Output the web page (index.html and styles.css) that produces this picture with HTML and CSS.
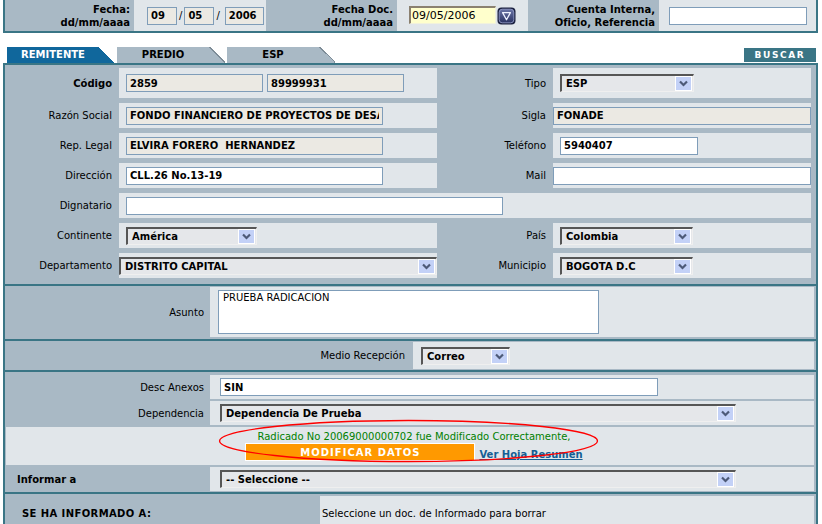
FILE: index.html
```html
<!DOCTYPE html>
<html lang="es">
<head>
<meta charset="utf-8">
<title>Radicación</title>
<link rel="stylesheet" href="styles.css">
</head>
<body>
<div class="page">
  <div class="header">
    <div class="hlabel"><span>Fecha:</span><span>dd/mm/aaaa</span></div>
    <div class="hval dates">
      <input class="inp ro d2" value="09"><span class="sl">/</span>
      <input class="inp ro d2" value="05"><span class="sl">/</span>
      <input class="inp ro d4" value="2006">
    </div>
    <div class="hlabel"><span>Fecha Doc.</span><span>dd/mm/aaaa</span></div>
    <div class="hval center">
      <input class="docdate" value="09/05/2006">
      <button class="cal" type="button" aria-label="calendario">
        <svg width="19" height="18" viewBox="0 0 19 18">
          <defs><linearGradient id="cg" x1="0" y1="0" x2="0" y2="1"><stop offset="0" stop-color="#6a74a6"/><stop offset="1" stop-color="#2a3262"/></linearGradient></defs>
          <rect x="0.5" y="0.5" width="18" height="17" rx="4" fill="#1c2140"/>
          <rect x="2.2" y="2.2" width="14.6" height="13.6" rx="3" fill="url(#cg)" stroke="#9aa3cf" stroke-width="0.8"/>
          <path d="M5.6 5.6 L13.4 5.6 L9.5 12.8 Z" fill="none" stroke="#eef1ff" stroke-width="1.3" stroke-linejoin="round"/>
        </svg>
      </button>
    </div>
    <div class="hlabel"><span>Cuenta Interna,</span><span>Oficio, Referencia</span></div>
    <div class="hval center"><input class="inp cuenta" value=""></div>
  </div>

  <div class="tabbar">
    <div class="tabs">
      <div class="tab active"><span class="tab-body">REMITENTE</span><span class="tab-slant"></span></div>
      <div class="tab"><span class="tab-body">PREDIO</span><span class="tab-slant"></span></div>
      <div class="tab"><span class="tab-body">ESP</span><span class="tab-slant"></span></div>
    </div>
    <button class="buscar" type="button">BUSCAR</button>
  </div>

  <div class="main">
    <div class="sec s1">
      <div class="lbl b">Código</div>
      <div class="val"><input class="inp ro w137" value="2859"><input class="inp ro w137 ml4" value="89999931"></div>
      <div class="lbl">Tipo</div>
      <div class="val"><div class="sel w134"><span>ESP</span><i class="arr"><svg width="15" height="13" viewBox="0 0 15 13"><path d="M4 4.5 L7.5 8 L11 4.5" fill="none" stroke="#4d5a78" stroke-width="2.2"/></svg></i></div></div>

      <div class="lbl">Razón Social</div>
      <div class="val"><input class="inp ro w257" value="FONDO FINANCIERO DE PROYECTOS DE DESARROLLO"></div>
      <div class="lbl">Sigla</div>
      <div class="val flush"><input class="inp ro full" value="FONADE"></div>

      <div class="lbl">Rep. Legal</div>
      <div class="val"><input class="inp ro w257" value="ELVIRA FORERO  HERNANDEZ"></div>
      <div class="lbl">Teléfono</div>
      <div class="val"><input class="inp w138" value="5940407"></div>

      <div class="lbl">Dirección</div>
      <div class="val"><input class="inp w257" value="CLL.26 No.13-19"></div>
      <div class="lbl">Mail</div>
      <div class="val flush"><input class="inp full" value=""></div>

      <div class="lbl">Dignatario</div>
      <div class="val span3"><input class="inp w377" value=""></div>

      <div class="lbl">Continente</div>
      <div class="val"><div class="sel w131"><span>América</span><i class="arr"><svg width="15" height="13" viewBox="0 0 15 13"><path d="M4 4.5 L7.5 8 L11 4.5" fill="none" stroke="#4d5a78" stroke-width="2.2"/></svg></i></div></div>
      <div class="lbl">País</div>
      <div class="val"><div class="sel w133"><span>Colombia</span><i class="arr"><svg width="15" height="13" viewBox="0 0 15 13"><path d="M4 4.5 L7.5 8 L11 4.5" fill="none" stroke="#4d5a78" stroke-width="2.2"/></svg></i></div></div>

      <div class="lbl">Departamento</div>
      <div class="val flush"><div class="sel full"><span>DISTRITO CAPITAL</span><i class="arr"><svg width="15" height="13" viewBox="0 0 15 13"><path d="M4 4.5 L7.5 8 L11 4.5" fill="none" stroke="#4d5a78" stroke-width="2.2"/></svg></i></div></div>
      <div class="lbl">Municipio</div>
      <div class="val"><div class="sel w133"><span>BOGOTA D.C</span><i class="arr"><svg width="15" height="13" viewBox="0 0 15 13"><path d="M4 4.5 L7.5 8 L11 4.5" fill="none" stroke="#4d5a78" stroke-width="2.2"/></svg></i></div></div>
    </div>

    <div class="sec s2">
      <div class="lbl lbl-low">Asunto</div>
      <div class="val pad8"><textarea class="txt">PRUEBA RADICACION</textarea></div>
    </div>

    <div class="sec s3">
      <div class="lbl lbl-medio">Medio Recepción</div>
      <div class="val pad8"><div class="sel w89"><span>Correo</span><i class="arr"><svg width="15" height="13" viewBox="0 0 15 13"><path d="M4 4.5 L7.5 8 L11 4.5" fill="none" stroke="#4d5a78" stroke-width="2.2"/></svg></i></div></div>
    </div>

    <div class="sec s4">
      <div class="lbl lbl-low">Desc Anexos</div>
      <div class="val pad10"><input class="inp w438" value="SIN"></div>

      <div class="lbl lbl-low">Dependencia</div>
      <div class="val pad10"><div class="sel w516"><span>Dependencia De Prueba</span><i class="arr"><svg width="15" height="13" viewBox="0 0 15 13"><path d="M4 4.5 L7.5 8 L11 4.5" fill="none" stroke="#4d5a78" stroke-width="2.2"/></svg></i></div></div>

      <div class="msg">
        <div class="ok">Radicado No 20069000000702 fue Modificado Correctamente,</div>
        <div class="actions">
          <button class="modificar" type="button">MODIFICAR DATOS</button>
          <a class="hoja" href="#">Ver Hoja Resumen</a>
        </div>
      </div>

      <div class="lbl lbl-left b">Informar a</div>
      <div class="val pad10"><div class="sel w516"><span>-- Seleccione --</span><i class="arr"><svg width="15" height="13" viewBox="0 0 15 13"><path d="M4 4.5 L7.5 8 L11 4.5" fill="none" stroke="#4d5a78" stroke-width="2.2"/></svg></i></div></div>

      <svg class="mark" width="381" height="44" viewBox="0 0 381 44">
        <ellipse cx="190.5" cy="22" rx="189" ry="20.5" fill="none" stroke="#ff0000" stroke-width="1.3"/>
      </svg>
    </div>

    <div class="sec s5">
      <div class="lbl lbl-info">SE HA INFORMADO A:</div>
      <div class="val info">Seleccione un doc. de Informado para borrar</div>
    </div>
  </div>
</div>
</body>
</html>
```

FILE: styles.css
```css
* { box-sizing: border-box; }

body {
  margin: 0;
  background: #ffffff;
  font-family: "DejaVu Sans", Verdana, sans-serif;
  font-size: 10px;
  color: #000;
}

.page { width: 822px; }

/* ---------- header ---------- */
.header {
  margin-left: 3px;
  width: 815px;
  height: 33px;
  border: 2px solid #3a7585;
  border-top: 0;
  display: grid;
  grid-template-columns: 129px 132px 131px 131px 131px 157px;
}

.hlabel {
  background: #a9b9c5;
  font-weight: bold;
  line-height: 13px;
  padding-right: 4px;
  display: flex;
  flex-direction: column;
  justify-content: center;
  align-items: flex-end;
  text-align: right;
}

.hval {
  background: #e1e6ea;
  display: flex;
  align-items: center;
}
.hval.dates { padding-left: 13px; gap: 2px; }
.hval.center { justify-content: center; gap: 1px; }
.sl { font-size: 10px; color: #000; }

.inp {
  height: 18px;
  border: 1px solid #7f9db9;
  background: #ffffff;
  font: bold 10px "DejaVu Sans", Verdana, sans-serif;
  color: #000;
  padding: 0 3px;
  outline: none;
  margin: 0;
}
.ro { background: #ebe9e3; }
.d2 { width: 30px; }
.d4 { width: 39px; margin-left: 3px; }
.cuenta { width: 138px; }

.docdate {
  width: 87px;
  height: 18px;
  background: #ffffcc;
  border: 1px solid #f2f2dc;
  border-top: 2px solid #8a8070;
  border-left: 2px solid #8a8070;
  font: 11px "DejaVu Sans", Verdana, sans-serif;
  padding: 0 1px;
  outline: none;
  margin: 0 0 1px 0;
}
.cal {
  width: 19px;
  height: 18px;
  padding: 0;
  border: 0;
  background: none;
  display: flex;
}

/* ---------- tabs ---------- */
.tabbar {
  height: 30px;
  display: flex;
  justify-content: space-between;
  align-items: flex-end;
  padding: 0 6px 0 7px;
}
.tabs { display: flex; gap: 2px; }
.tab { display: flex; height: 16px; }
.tab-body {
  width: 92px;
  background: #a9b9c5;
  font-weight: bold;
  text-align: center;
  line-height: 16px;
  color: #000;
}
.tab-slant {
  width: 16px;
  background: linear-gradient(to top right, #a9b9c5 50%, #7d8c97 50%, #7d8c97 56%, transparent 56%);
}
.tab.active .tab-body { background: #10679c; color: #ffffff; }
.tab.active .tab-slant {
  background: linear-gradient(to top right, #10679c 50%, transparent 50%);
}

.buscar {
  width: 72px;
  height: 14px;
  margin-bottom: 1px;
  padding: 0;
  border: 0;
  background: #3a7585;
  color: #ffffff;
  font: bold 9px "DejaVu Sans", Verdana, sans-serif;
  letter-spacing: 1.6px;
  line-height: 14px;
  text-align: center;
}

/* ---------- main form ---------- */
.main {
  margin-left: 3px;
  width: 815px;
  border: 2px solid #3a7585;
  border-bottom: 0;
  background: #a9b9c5;
}

.sec { display: grid; column-gap: 1px; }
.sec + .sec { border-top: 2px solid #3a7585; }

.lbl {
  display: flex;
  align-items: center;
  justify-content: flex-end;
  padding-right: 6px;
  white-space: nowrap;
}
.b { font-weight: bold; }

.val {
  background: #e1e6ea;
  display: flex;
  align-items: center;
  padding-left: 7px;
  min-width: 0;
}
.val.flush { padding-left: 0; }
.val.pad8 { padding-left: 8px; }
.val.pad10 { padding-left: 10px; }
.span3 { grid-column: 2 / 5; }

.full { width: 100%; }
.ml4 { margin-left: 4px; }
.w137 { width: 137px; }
.w138 { width: 138px; }
.w257 { width: 257px; }
.w377 { width: 377px; }
.w438 { width: 438px; }

/* fake select */
.sel {
  height: 18px;
  display: flex;
  align-items: center;
  justify-content: space-between;
  background: #e5e7ea;
  border-top: 2px solid #565656;
  border-left: 2px solid #565656;
  border-right: 1px solid #efefef;
  border-bottom: 1px solid #efefef;
  padding: 0 1px 0 4px;
  font-weight: bold;
  white-space: nowrap;
}
.arr {
  width: 17px;
  height: 15px;
  background: #c3d1f7;
  border: 1px solid #ffffff;
  display: flex;
  flex: none;
}
.w89 { width: 89px; }
.w131 { width: 131px; }
.w133 { width: 133px; }
.w134 { width: 134px; }
.w516 { width: 516px; }

.s1 {
  grid-template-columns: 113px 318px 114px 258px;
  grid-template-rows: 30px repeat(6, 25px);
  row-gap: 5px;
  padding: 3px 5px 6px 0;
}

.s2 {
  grid-template-columns: 204px 604px;
  grid-template-rows: 50px;
  padding: 1px 2px 2px 0;
}
.lbl-low { padding-right: 5px; }
.txt {
  width: 381px;
  height: 44px;
  border: 1px solid #7f9db9;
  background: #fff;
  font: 10px "DejaVu Sans", Verdana, sans-serif;
  padding: 1px 4px;
  resize: none;
  outline: none;
}

.s3 {
  grid-template-columns: 407px 401px;
  grid-template-rows: 27px;
  padding: 1px 2px 1px 0;
}
.lbl-medio { padding-right: 7px; }

.s4 {
  position: relative;
  grid-template-columns: 204px 604px;
  grid-template-rows: 24px 24px 38px 24px;
  row-gap: 2px;
  padding: 3px 2px 1px 0;
}
.msg {
  grid-column: 1 / 3;
  background: #e1e6ea;
  margin-left: 1px;
  display: flex;
  flex-direction: column;
  align-items: center;
  padding: 4px 0 0 8px;
}
.ok { color: #008000; line-height: 12px; }
.actions { display: flex; align-items: flex-end; gap: 4px; }
.modificar {
  width: 230px;
  height: 18px;
  background: #ff9900;
  border: 1px solid #ffffff;
  color: #ffffff;
  font: bold 10px "DejaVu Sans", Verdana, sans-serif;
  letter-spacing: 1px;
  padding: 0;
}
.hoja {
  color: #145f94;
  font-weight: bold;
  text-decoration: underline;
  line-height: 13px;
}
.lbl-left { justify-content: flex-start; padding-left: 12px; }

.mark {
  position: absolute;
  left: 213px;
  top: 47px;
  z-index: 2;
  pointer-events: none;
}

.s5 {
  grid-template-columns: 314px 494px;
  grid-template-rows: 34px;
  padding: 2px 2px 0 0;
}
.lbl-info {
  justify-content: flex-start;
  padding-left: 17px;
  font-weight: bold;
  letter-spacing: 0.4px;
}
.val.info { padding-left: 2px; }
```
